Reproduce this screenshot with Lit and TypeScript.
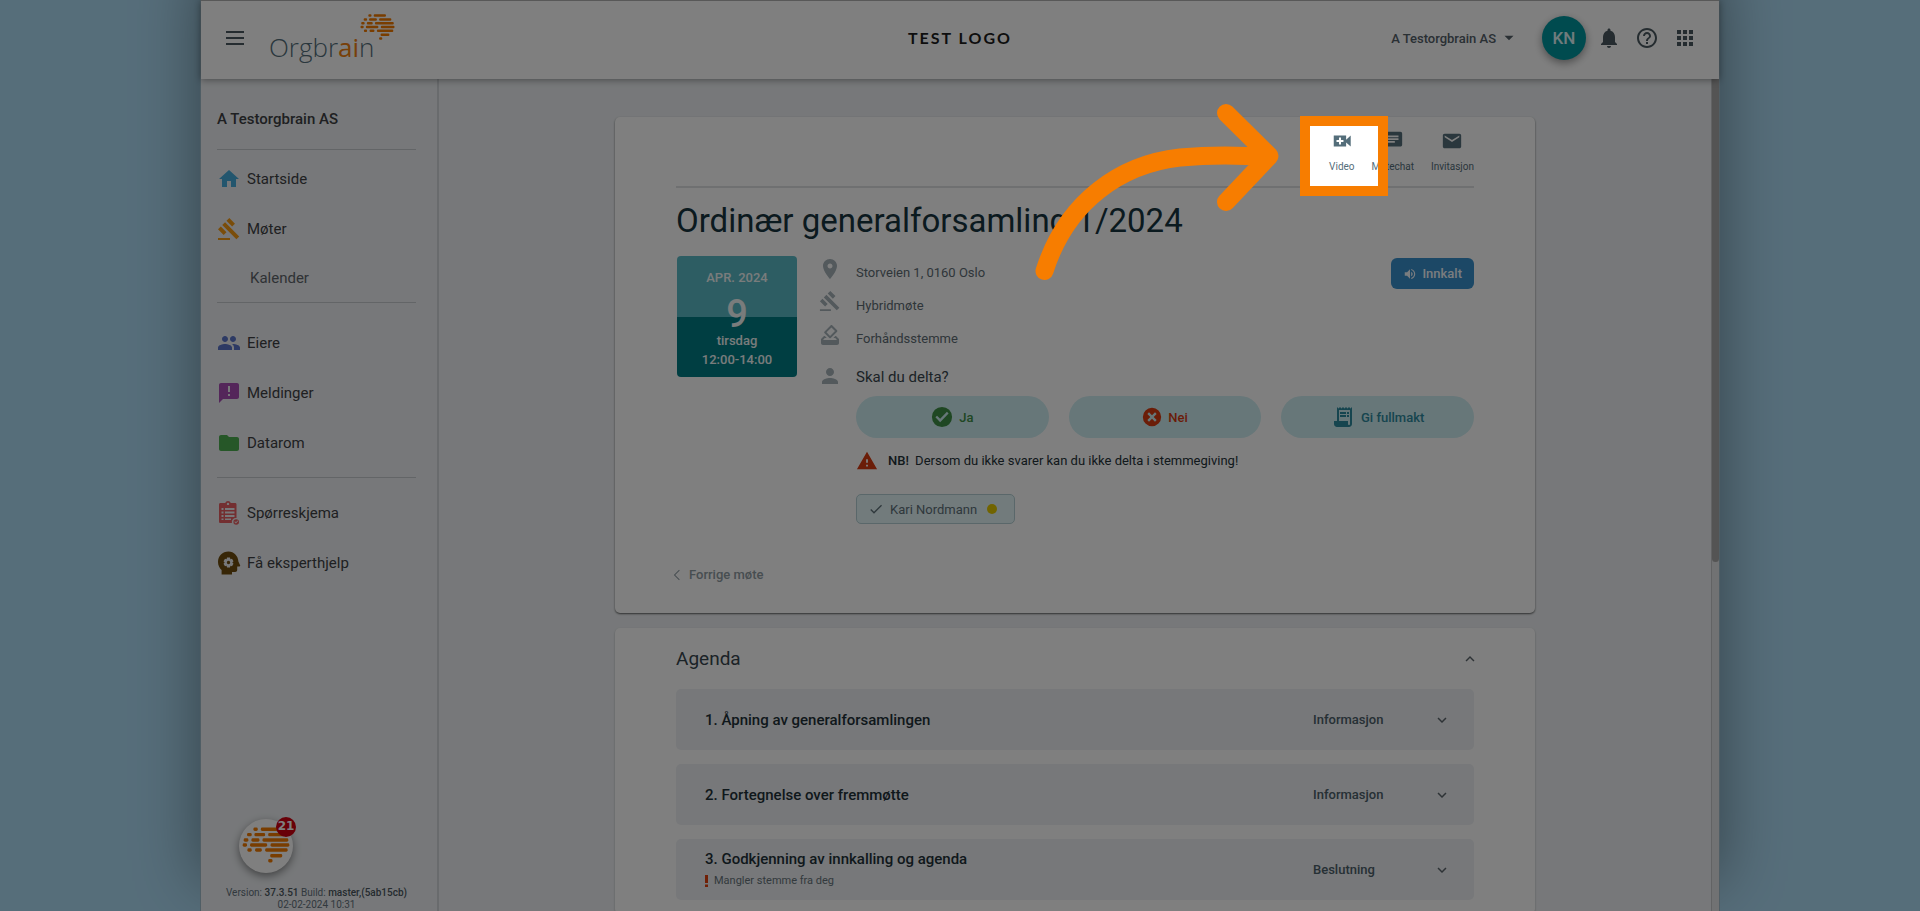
import { LitElement, html, svg, css } from "lit";
import { customElement, property } from "lit/decorators.js";

const ICONS: Record<string, string> = {
  menu: "M3 5h18v2H3zM3 11h18v2H3zM3 17h18v2H3z",
  home: "M10 20v-6h4v6h5v-8h3L12 3 2 12h3v8z",
  gavel: "M1 21h12v2H1zM5.245 8.07l2.83-2.827 14.14 14.142-2.828 2.828zM12.317 1l5.657 5.656-2.83 2.83-5.654-5.66zM3.825 9.485l5.657 5.657-2.828 2.828-5.657-5.657z",
  group: "M16 11c1.66 0 2.99-1.34 2.99-3S17.66 5 16 5c-1.66 0-3 1.34-3 3s1.34 3 3 3zm-8 0c1.66 0 2.99-1.34 2.99-3S9.66 5 8 5C6.34 5 5 6.34 5 8s1.34 3 3 3zm0 2c-2.33 0-7 1.17-7 3.5V19h14v-2.5c0-2.33-4.67-3.5-7-3.5zm8 0c-.29 0-.62.02-.97.05 1.16.84 1.97 1.97 1.97 3.45V19h6v-2.5c0-2.33-4.67-3.5-7-3.5z",
  feedback: "M20 2H4c-1.1 0-1.99.9-1.99 2L2 22l4-4h14c1.1 0 2-.9 2-2V4c0-1.1-.9-2-2-2zm-7 13h-2v-2h2v2zm0-4h-2V5h2v6z",
  folder: "M10 4H4c-1.1 0-1.99.9-1.99 2L2 18c0 1.1.9 2 2 2h16c1.1 0 2-.9 2-2V8c0-1.1-.9-2-2-2h-8l-2-2z",
  survey: "M18 2h-4.2a3 3 0 0 0-5.6 0H3.500c-1 0-1.500.6-1.500 1.500v17c0 1 .5 1.500 1.500 1.500H15a4 4 0 0 1 4.500-5V3.500C19.500 2.500 19 2 18 2zM11 1.700a1.200 1.200 0 1 1 0 2.400 1.200 1.200 0 0 1 0-2.400zM4.500 7h2v2h-2zM8 7h9.500v2H8zM4.500 10.500h2v2h-2zM8 10.500h9.500v2H8zM4.500 14h2v2h-2zM8 14h9.500v2H8zM4.500 17.500h2v1.500h-2zM8 17.500h6v1.500H8zM19.200 18.200a2.800 2.800 0 1 0 0 5.600 2.800 2.800 0 0 0 0-5.600zM18.900 22.400l-1.500-1.500.6-.6.9.9 1.700-1.700.6.6z",
  expert: "M11.500.5C5.500.5 1 5 1 11c0 3.400 1.500 6.200 3.600 8v4.500H15V21h3.200c1.100 0 2-.9 2-2v-3.500h2.200c.7 0 1-.7.7-1.200L21.400 10.500C21.100 5 17 .5 11.500.5zM10 6.500h3l.4 1.700 1.600-.5 1.500 2.600-1.200 1.200 1.200 1.200-1.500 2.600-1.600-.5-.4 1.700h-3l-.4-1.700-1.600.5-1.500-2.600 1.200-1.200-1.200-1.200L8 7.700l1.600.5zM11.500 9.800a1.700 1.700 0 1 0 0 3.400 1.700 1.700 0 0 0 0-3.400z",
  place: "M12 2C8.130 2 5 5.130 5 9c0 5.250 7 13 7 13s7-7.750 7-13c0-3.870-3.130-7-7-7zm0 9.500c-1.380 0-2.500-1.120-2.500-2.500s1.120-2.500 2.500-2.500 2.500 1.120 2.500 2.500-1.120 2.500-2.500 2.500z",
  vote: "M18 13h-.68l-2 2h1.910L19 17H5l1.780-2h2.050l-2-2H6l-3 3v4c0 1.100.89 2 1.990 2H19c1.100 0 2-.89 2-2v-4l-3-3zm-1-5.050l-4.950 4.950-3.540-3.540 4.950-4.950L17 7.950zm-4.240-5.660L6.390 8.660c-.39.39-.39 1.020 0 1.410l4.950 4.950c.39.39 1.020.39 1.410 0l6.360-6.360c.39-.39.39-1.020 0-1.410L14.160 2.300c-.38-.4-1.010-.4-1.400-.01z",
  person: "M12 12c2.210 0 4-1.790 4-4s-1.790-4-4-4-4 1.790-4 4 1.790 4 4 4zm0 2c-2.670 0-8 1.340-8 4v2h16v-2c0-2.660-5.330-4-8-4z",
  bell: "M12 22c1.100 0 2-.9 2-2h-4c0 1.100.89 2 2 2zm6-6v-5c0-3.070-1.640-5.640-4.500-6.320V4c0-.83-.67-1.500-1.500-1.500s-1.500.67-1.500 1.500v.68C7.630 5.360 6 7.920 6 11v5l-2 2v1h16v-1l-2-2z",
  help: "M11 18h2v-2h-2v2zm1-16C6.480 2 2 6.480 2 12s4.480 10 10 10 10-4.480 10-10S17.520 2 12 2zm0 18c-4.410 0-8-3.590-8-8s3.590-8 8-8 8 3.590 8 8-3.590 8-8 8zm0-14c-2.210 0-4 1.790-4 4h2c0-1.100.9-2 2-2s2 .9 2 2c0 2-3 1.750-3 5h2c0-2.250 3-2.500 3-5 0-2.210-1.790-4-4-4z",
  apps: "M4 8h4V4H4v4zm6 12h4v-4h-4v4zm-6 0h4v-4H4v4zm0-6h4v-4H4v4zm6 0h4v-4h-4v4zm6-10v4h4V4h-4zm-6 4h4V4h-4v4zm6 6h4v-4h-4v4zm0 6h4v-4h-4v4z",
  video: "M3 6h13.500v4.500L21.500 6v12l-5-4.500V18H3zM8.700 8.200v2.700H6v2.200h2.700v2.700h2.200v-2.700h2.700v-2.200h-2.700V8.200z",
  chat: "M20 2H4c-1.100 0-1.990.9-1.990 2L2 22l4-4h14c1.100 0 2-.9 2-2V4c0-1.100-.9-2-2-2zM6 9h12v2H6V9zm8 5H6v-2h8v2zm4-6H6V6h12v2z",
  mail: "M20 4H4c-1.100 0-1.990.9-1.990 2L2 18c0 1.100.9 2 2 2h16c1.100 0 2-.9 2-2V6c0-1.100-.9-2-2-2zm0 4l-8 5-8-5V6l8 5 8-5v2z",
  volume: "M14 3.230v2.060c2.890.86 5 3.540 5 6.710s-2.110 5.840-5 6.700v2.070c4-.91 7-4.490 7-8.770s-3-7.860-7-8.770M16.500 12c0-1.770-1-3.290-2.500-4.030V16c1.500-.71 2.500-2.240 2.500-4M3 9v6h4l5 5V4L7 9z",
  yes: "M12 1a11 11 0 1 0 0 22 11 11 0 0 0 0-22zM10 17.600l-5.200-5.200 1.800-1.800 3.400 3.400 7.400-7.600 1.800 1.800z",
  no: "M12 1a11 11 0 1 0 0 22 11 11 0 0 0 0-22zM17.600 15.600l-2 2L12 14l-3.600 3.600-2-2L10 12 6.400 8.400l2-2L12 10l3.600-3.600 2 2L14 12z",
  proxy: "M19.500 3.500L18 2l-1.500 1.500L15 2l-1.500 1.500L12 2l-1.500 1.500L9 2 7.500 3.500 6 2v14H3v3c0 1.660 1.340 3 3 3h12c1.660 0 3-1.340 3-3V2l-1.500 1.500zM19 19c0 .55-.45 1-1 1s-1-.45-1-1v-3H8V5h11v14zM9 7h6v2H9zM16 7h2v2h-2zM9 10h6v2H9zM16 10h2v2h-2z",
  warning: "M1 21h22L12 2 1 21zm12-3h-2v-2h2v2zm0-4h-2v-4h2v4z",
  check: "M9 16.200L4.800 12l-1.400 1.400L9 19 21 7l-1.400-1.400z",
  caret: "M6 9h12l-6 6z",
  left: "M15.500 3L6.500 12l9 9 1.200-1.200L8.900 12l7.800-7.800z",
  up: "M12 8l-6 6 1.410 1.410L12 10.830l4.590 4.580L18 14z",
  down: "M7.410 8.590L12 13.170l4.590-4.580L18 10l-6 6-6-6z",
};

const icon = (name: string, size = 24) => html`
  <svg class="icon" width=${size} height=${size} viewBox="0 0 24 24" aria-hidden="true">
    <path fill-rule="evenodd" d=${ICONS[name]}></path>
  </svg>`;

/* Dashes of the brain mark: start x, end x, y */
const DASHES = [
  [190, 203, 151], [212, 262, 151],
  [171, 185, 167], [193, 225, 167], [234, 284, 167],
  [161, 175, 183], [184, 208, 183], [217, 294, 183],
  [158, 171, 198], [180, 231, 198], [241, 297, 198],
  [172, 185, 213], [195, 215, 213], [225, 292, 213],
  [240, 276, 230], [234, 247, 245],
];

const brain = (width: number) => html`
  <svg width=${width} height=${Math.round(width * 0.74)} viewBox="156 145 143 106" aria-hidden="true">
    ${DASHES.map(([a, b, y]) => svg`<rect x=${a} y=${y - 5} width=${b - a} height="10" rx="4" fill="#f27a00"></rect>`)}
  </svg>`;

@customElement("app-header")
class AppHeader extends LitElement {
  static styles = css`
    :host {
      display: grid;
      grid-template-columns: 1fr auto 1fr;
      align-items: center;
      height: 79px;
      box-sizing: border-box;
      padding: 0 22px 4px 22px;
      border-top: 1px solid #b0b0b0;
      background: #fff;
      box-shadow: 0 1px 7px rgba(0, 0, 0, 0.4);
      position: relative;
      z-index: 1;
    }
    .left, .right { display: flex; align-items: center; }
    .right { justify-content: flex-end; }
    button {
      border: 0;
      padding: 0;
      background: none;
      font: inherit;
      color: #4a5960;
      display: flex;
      align-items: center;
      cursor: pointer;
    }
    .icon { fill: currentColor; display: block; }
    .logo {
      display: flex;
      margin-left: 22px;
      text-decoration: none;
      color: #546e7a;
      font: 350 26px/36px "Open Sans", sans-serif;
    }
    .word { padding-top: 17px; }
    .word b { font-weight: 400; color: #f08010; }
    .mark { margin: 0 0 0 -14px; }
    .tenant {
      color: #1c1c1c;
      font: 700 16px/20px Lato, sans-serif;
      letter-spacing: 2px;
    }
    .org { font-size: 13px; font-weight: 500; gap: 4px; color: #546069; }
    .avatar {
      width: 44px;
      height: 44px;
      margin: 0 11px 0 24px;
      border-radius: 50%;
      background: #00979f;
      color: #e0f7fa;
      justify-content: center;
      font-size: 17px;
      font-weight: 500;
      box-shadow: 0 3px 8px rgba(0, 0, 0, 0.4);
    }
    .tools { display: flex; gap: 14px; }
  `;
  render() {
    return html`
      <div class="left">
        <button aria-label="Meny">${icon("menu", 24)}</button>
        <a class="logo" href="#">
          <span class="word">Orgbr<b>ai</b>n</span>
          <span class="mark">${brain(35)}</span>
        </a>
      </div>
      <div class="tenant">TEST LOGO</div>
      <div class="right">
        <button class="org">A Testorgbrain AS ${icon("caret", 18)}</button>
        <button class="avatar">KN</button>
        <div class="tools">
          <button aria-label="Varsler">${icon("bell", 24)}</button>
          <button aria-label="Hjelp">${icon("help", 24)}</button>
          <button aria-label="Apper">${icon("apps", 24)}</button>
        </div>
      </div>`;
  }
}

@customElement("app-sidebar")
class AppSidebar extends LitElement {
  static styles = css`
    :host {
      display: flex;
      flex-direction: column;
      flex: 0 0 238px;
      box-sizing: border-box;
      padding: 0 21px 0 16px;
      border-right: 2px solid #d2d6da;
      color: #3f4144;
      font-size: 15px;
    }
    .org { margin: 0; padding: 28px 0 18px; font-size: 15px; line-height: 24px; font-weight: 500; }
    nav { display: flex; flex-direction: column; }
    hr { width: 100%; margin: 0; border: 0; border-top: 1px solid #c6cace; }
    .group { padding: 10px 0 9px; }
    .group.first { padding: 4px 0 0; }
    .group.second { padding-top: 15px; }
    a { display: flex; align-items: center; gap: 6px; height: 50px; color: inherit; text-decoration: none; }
    a.sub { padding-left: 33px; height: 48px; color: #5f656b; }
    .icon { display: block; }
    .blue .icon { fill: #46acdc; }
    .orange .icon { fill: #f59a14; }
    .indigo .icon { fill: #5a74c8; }
    .purple .icon { fill: #a84cb4; }
    .green .icon { fill: #4caf50; }
    .red .icon { fill: #e65f62; }
    .brown .icon { fill: #6e4c0e; }
    .fab {
      position: relative;
      display: flex;
      align-items: center;
      justify-content: center;
      width: 54px;
      height: 54px;
      margin: auto 0 14px 22px;
      padding: 0 0 2px;
      border: 0;
      border-radius: 50%;
      background: #fff;
      font: inherit;
      box-shadow: 0 3px 8px rgba(0, 0, 0, 0.45);
    }
    .badge {
      position: absolute;
      top: -2px;
      right: -3px;
      width: 20px;
      height: 20px;
      border-radius: 50%;
      background: #d00010;
      color: #fff;
      font: 700 12px/18px "DejaVu Sans", sans-serif;
    }
    .version { text-align: center; font-size: 10px; line-height: 12px; color: #64727c; }
    .version b { font-weight: 500; color: #4a565e; }
  `;
  link(name: string, color: string, label: string) {
    return html`<a class=${color} href="#">${icon(name, 24)}<span>${label}</span></a>`;
  }
  render() {
    return html`
      <h2 class="org">A Testorgbrain AS</h2>
      <nav>
        <hr />
        <div class="group first">
          ${this.link("home", "blue", "Startside")}
          ${this.link("gavel", "orange", "Møter")}
          <a class="sub" href="#">Kalender</a>
        </div>
        <hr />
        <div class="group second">
          ${this.link("group", "indigo", "Eiere")}
          ${this.link("feedback", "purple", "Meldinger")}
          ${this.link("folder", "green", "Datarom")}
        </div>
        <hr />
        <div class="group">
          ${this.link("survey", "red", "Spørreskjema")}
          ${this.link("expert", "brown", "Få eksperthjelp")}
        </div>
      </nav>
      <button class="fab">${brain(48)}<span class="badge">21</span></button>
      <div class="version">
        Version: <b>37.3.51</b> Build: <b>master,(5ab15cb)</b><br />02-02-2024 10:31
      </div>`;
  }
}

@customElement("meeting-card")
class MeetingCard extends LitElement {
  static styles = css`
    :host {
      display: block;
      box-sizing: border-box;
      padding: 0 61px 26px;
      border-radius: 5px;
      background: #fff;
      box-shadow: 0 1px 2px rgba(0, 0, 0, 0.6);
    }
    .icon { display: block; fill: currentColor; }
    button { font: inherit; border: 0; cursor: pointer; }
    .toolbar {
      display: flex;
      justify-content: flex-end;
      gap: 17px;
      padding: 13px 0 12px;
      border-bottom: 2px solid #dfe1e3;
    }
    .toolbar button {
      display: flex;
      flex-direction: column;
      align-items: center;
      gap: 8px;
      padding: 0;
      background: none;
      color: #546e7a;
      font-size: 10px;
      line-height: 14px;
    }
    h1 { margin: 0; padding: 13px 0 10px; font-size: 33px; line-height: 40px; font-weight: 400; color: #17343f; }
    .body { display: grid; grid-template-columns: 120px 1fr; gap: 21px; padding-left: 1px; }
    .date {
      display: flex;
      flex-direction: column;
      align-items: center;
      height: 121px;
      box-sizing: border-box;
      padding-top: 12px;
      margin-top: 5px;
      border-radius: 4px;
      background: linear-gradient(#5abac6 50%, #007c84 50%);
      color: #f2f8f9;
      font-size: 13px;
      line-height: 19px;
      font-weight: 500;
    }
    .date strong { padding-top: 10px; font-size: 38px; line-height: 34px; font-weight: 500; }
    .facts { display: grid; grid-template-columns: 24px 1fr auto; column-gap: 14px; align-content: start; }
    .fact { display: contents; }
    .fact .icon { fill: #a6b2b8; justify-self: center; margin: 6px 0 -6px; }
    .fact span { grid-column: 2 / 4; line-height: 33px; font-size: 13px; color: #5e6c74; padding-top: 5px; margin-bottom: -5px; }
    .fact.place span { grid-column: 2; }
    .status {
      display: flex;
      align-items: center;
      gap: 5px;
      height: 31px;
      margin: 7px 0 -5px;
      padding: 0 12px;
      border-radius: 6px;
      background: #3890cc;
      color: #f4faff;
      font-weight: 500;
      font-size: 13px;
    }
    .ask { display: contents; }
    .ask .icon { fill: #a6b2b8; justify-self: center; margin-top: 14px; }
    .ask p { grid-column: 2 / 4; margin: 0; padding-top: 14px; font-size: 15px; line-height: 26px; color: #3a474e; }
    .rest { grid-column: 2 / 4; }
    .answers { display: grid; grid-template-columns: repeat(3, 1fr); gap: 20px; padding-top: 6px; }
    .answers button {
      display: flex;
      align-items: center;
      justify-content: center;
      gap: 6px;
      height: 42px;
      border-radius: 21px;
      background: #ceeef2;
      font-size: 13px;
      font-weight: 500;
    }
    .answers .yes { color: #3f8f46; }
    .answers .no { color: #d63a10; }
    .answers .proxy { color: #2d8a9e; }
    .note { display: flex; align-items: center; gap: 10px; padding-top: 11px; font-size: 13px; line-height: 24px; color: #253238; }
    .note .icon { fill: #d63a10; }
    .note b { font-weight: 500; padding-right: 3px; }
    .chip {
      display: inline-flex;
      align-items: center;
      gap: 6px;
      height: 30px;
      box-sizing: border-box;
      margin-top: 21px;
      padding: 0 17px 0 11px;
      border: 1px solid #b4cfd4;
      border-radius: 5px;
      background: #e4f6f9;
      font-size: 13px;
      color: #5e7078;
    }
    .dot { width: 10px; height: 10px; margin-left: 4px; border-radius: 50%; background: #e2c800; }
    .prev { display: inline-flex; align-items: center; gap: 5px; margin: 39px 0 0 -6px; color: #8f9ca3; font-size: 13px; line-height: 24px; text-decoration: none; font-weight: 500; }
  `;
  render() {
    return html`
      <div class="toolbar">
        <button>${icon("video", 22)}Video</button>
        <button>${icon("chat", 22)}Møtechat</button>
        <button>${icon("mail", 22)}Invitasjon</button>
      </div>
      <h1>Ordinær generalforsamling 1/2024</h1>
      <div class="body">
        <div class="date"><span>APR. 2024</span><strong>9</strong><span>tirsdag</span><span>12:00-14:00</span></div>
        <div class="facts">
          <div class="fact place">${icon("place", 24)}<span>Storveien 1, 0160 Oslo</span></div>
          <button class="status">${icon("volume", 14)}Innkalt</button>
          <div class="fact">${icon("gavel", 22)}<span>Hybridmøte</span></div>
          <div class="fact">${icon("vote", 24)}<span>Forhåndsstemme</span></div>
          <div class="ask">${icon("person", 24)}<p>Skal du delta?</p></div>
          <div class="rest">
            <div class="answers">
              <button class="yes">${icon("yes", 22)}Ja</button>
              <button class="no">${icon("no", 20)}Nei</button>
              <button class="proxy">${icon("proxy", 24)}Gi fullmakt</button>
            </div>
            <div class="note">${icon("warning", 22)}<span><b>NB!</b> Dersom du ikke svarer kan du ikke delta i stemmegiving!</span></div>
            <div class="chip">${icon("check", 16)}Kari Nordmann<span class="dot"></span></div>
          </div>
        </div>
      </div>
      <a class="prev" href="#">${icon("left", 14)}Forrige møte</a>`;
  }
}

interface AgendaItem { title: string; kind: string; missing?: string }

@customElement("agenda-card")
class AgendaCard extends LitElement {
  static styles = css`
    :host {
      display: block;
      box-sizing: border-box;
      padding: 0 61px;
      border-radius: 5px;
      background: #fff;
      box-shadow: 0 1px 2px rgba(0, 0, 0, 0.3);
    }
    .icon { display: block; fill: #5c666c; }
    button { font: inherit; text-align: left; border: 0; background: none; cursor: pointer; }
    .head {
      display: flex;
      justify-content: space-between;
      align-items: center;
      width: 100%;
      height: 61px;
      padding: 0;
      font-size: 19px;
      color: #37464e;
    }
    .head .icon { margin-right: -5px; }
    .list { display: flex; flex-direction: column; gap: 14px; margin: 0; padding: 0 0 14px; list-style: none; }
    .item {
      display: grid;
      grid-template-columns: 1fr 120px 20px;
      align-items: center;
      width: 100%;
      height: 61px;
      padding: 0 21px 0 29px;
      border-radius: 5px;
      background: #eef1f4;
      font-size: 15px;
      font-weight: 500;
      color: #1f3038;
    }
    .title { display: block; line-height: 22px; }
    .missing { display: flex; align-items: center; gap: 6px; font-size: 11px; line-height: 22px; font-weight: 400; color: #66737a; }
    .bang { width: 3px; height: 12px; fill: #e0400c; }
    .kind { font-size: 13px; color: #4d606a; }
  `;
  @property({ attribute: false }) items: AgendaItem[] = [];
  render() {
    return html`
      <button class="head">Agenda ${icon("up", 18)}</button>
      <ol class="list">
        ${this.items.map((it) => html`
          <li>
            <button class="item">
              <span>
                <span class="title">${it.title}</span>
                ${it.missing ? html`<span class="missing">
                  <svg class="bang" viewBox="0 0 3 12"><path d="M0 0h3v8H0zM0 9.500h3v2.500H0z"></path></svg>${it.missing}</span>` : ""}
              </span>
              <span class="kind">${it.kind}</span>
              ${icon("down", 18)}
            </button>
          </li>`)}
      </ol>`;
  }
}

@customElement("app-root")
class AppRoot extends LitElement {
  static styles = css`
    :host {
      display: block;
      position: relative;
      height: 100vh;
      overflow: hidden;
      box-sizing: border-box;
      padding: 0 200px;
      background: #addcf5;
      font-family: Roboto, sans-serif;
    }
    .window {
      display: flex;
      flex-direction: column;
      height: 100%;
      box-sizing: border-box;
      border: solid #a0bccb;
      border-width: 0 1px;
      background: #eef1f4;
      box-shadow: 0 -30px 60px rgba(0, 0, 0, 0.4);
    }
    .columns { display: flex; flex: 1; min-height: 0; }
    main { flex: 1; min-width: 0; overflow: hidden; padding: 38px 20px 0; }
    .stack { display: flex; flex-direction: column; gap: 15px; max-width: 920px; margin: 0 auto; }
    .track { flex: 0 0 8px; background: #e2e4e6; border-left: 1px solid #c4c6c8; box-sizing: border-box; }
    .thumb { height: 58%; border-radius: 0 0 4px 4px; background: #a8a8a8; }
    .spotlight {
      position: absolute;
      z-index: 2;
      top: 116px;
      right: 532px;
      width: 68px;
      height: 60px;
      border: 10px solid #f77d00;
      box-shadow: 0 0 0 3000px rgba(0, 0, 0, 0.5);
      pointer-events: none;
    }
    .arrow {
      position: absolute;
      z-index: 3;
      top: 100px;
      right: 636px;
      width: 250px;
      height: 184px;
      fill: none;
      stroke: #f77d00;
      stroke-width: 18;
      stroke-linecap: round;
      stroke-linejoin: round;
      pointer-events: none;
    }
  `;
  items: AgendaItem[] = [
    { title: "1. Åpning av generalforsamlingen", kind: "Informasjon" },
    { title: "2. Fortegnelse over fremmøtte", kind: "Informasjon" },
    { title: "3. Godkjenning av innkalling og agenda", kind: "Beslutning", missing: "Mangler stemme fra deg" },
  ];
  render() {
    return html`
      <div class="window">
        <app-header></app-header>
        <div class="columns">
          <app-sidebar></app-sidebar>
          <main>
            <div class="stack">
              <meeting-card></meeting-card>
              <agenda-card .items=${this.items}></agenda-card>
            </div>
          </main>
          <div class="track"><div class="thumb"></div></div>
        </div>
      </div>
      <div class="spotlight"></div>
      <svg class="arrow" viewBox="1034 100 250 184" aria-hidden="true">
        <path d="M1044.500 271C1067 200 1122 164 1180 157.500C1206 155 1240 155 1268 157M1226 113l43.500 43L1226 202"></path>
      </svg>`;
  }
}
